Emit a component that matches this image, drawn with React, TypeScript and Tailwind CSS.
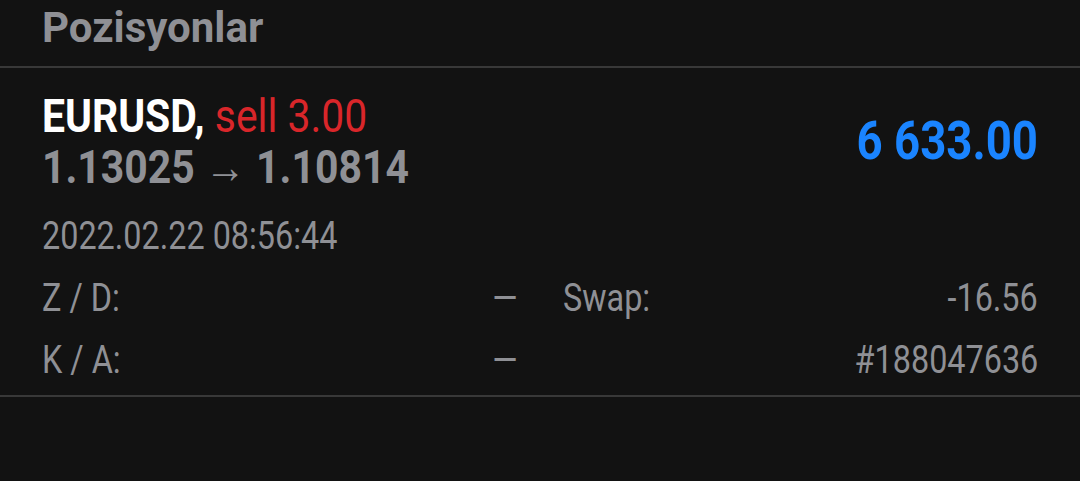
import React from "react";

type Row = { label: string; value: string };

const leftRows: Row[] = [
  { label: "Z / D:", value: "—" },
  { label: "K / A:", value: "—" },
];

const rightRows: Row[] = [
  { label: "Swap:", value: "-16.56" },
  { label: "", value: "#188047636" },
];

function InfoColumn({ rows }: { rows: Row[] }) {
  return (
    <div className="flex flex-col">
      {rows.map((row, i) => (
        <div
          key={i}
          className="flex justify-between text-[39px] leading-[62px] text-[#8f9095] whitespace-nowrap"
        >
          <span className="inline-block origin-left scale-x-[0.83]">
            {row.label}
          </span>
          <span className="inline-block origin-right scale-x-[0.83]">
            {row.value}
          </span>
        </div>
      ))}
    </div>
  );
}

export default function App() {
  return (
    <div
      className="w-[1080px] h-[481px] overflow-hidden bg-[#121212]"
      style={{ fontFamily: "Roboto, 'Noto Sans', sans-serif" }}
    >
      <div className="h-[68px] pt-[7px] px-[42px] border-b-2 border-[#383838]">
        <h1 className="text-[42px] leading-none font-bold text-[#8f9095]">
          Pozisyonlar
        </h1>
      </div>

      <div className="px-[42px] pt-[24px] pb-[4px] border-b-2 border-[#383838]">
        <div className="flex items-center justify-between whitespace-nowrap">
          <div className="flex flex-col gap-[5px]">
            <div className="text-[47px] leading-none">
              <span className="inline-block origin-left scale-x-[0.87]">
                <span className="font-bold text-white">EURUSD,</span>{" "}
                <span className="text-[#d9262a]">sell 3.00</span>
              </span>
            </div>
            <div className="text-[46px] leading-none font-bold text-[#8f9095]">
              <span className="inline-block origin-left scale-x-[0.89]">
                1.13025 → 1.10814
              </span>
            </div>
          </div>
          <div className="text-[53px] leading-none font-bold text-[#1a84ff]">
            <span className="inline-block origin-right scale-x-[0.86]">
              6 633.00
            </span>
          </div>
        </div>

        <div className="mt-[15px] text-[39px] leading-[62px] text-[#8f9095] whitespace-nowrap">
          <span className="inline-block origin-left scale-x-[0.83]">
            2022.02.22 08:56:44
          </span>
        </div>

        <div className="grid grid-cols-2 gap-x-[46px]">
          <InfoColumn rows={leftRows} />
          <InfoColumn rows={rightRows} />
        </div>
      </div>
    </div>
  );
}
